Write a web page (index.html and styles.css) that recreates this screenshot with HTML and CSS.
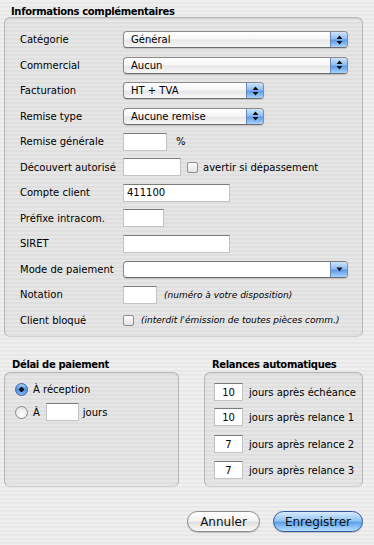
FILE: index.html
```html
<!DOCTYPE html>
<html lang="fr">
<head>
  <meta charset="UTF-8">
  <title>Informations complémentaires</title>
  <link rel="stylesheet" href="styles.css">
</head>
<body>

  <div class="group-title top">Informations complémentaires</div>
  <div class="group main">
    <div class="row">
      <span class="label">Catégorie</span>
      <div class="popup wide"><span class="value">Général</span><span class="knob"><svg width="7" height="10" viewBox="0 0 7 10"><path d="M3.5 0.5 L6.5 4 L0.5 4 Z M3.5 9.5 L6.5 6 L0.5 6 Z" fill="#111"/></svg></span></div>
    </div>
    <div class="row">
      <span class="label">Commercial</span>
      <div class="popup wide"><span class="value">Aucun</span><span class="knob"><svg width="7" height="10" viewBox="0 0 7 10"><path d="M3.5 0.5 L6.5 4 L0.5 4 Z M3.5 9.5 L6.5 6 L0.5 6 Z" fill="#111"/></svg></span></div>
    </div>
    <div class="row">
      <span class="label">Facturation</span>
      <div class="popup short"><span class="value">HT + TVA</span><span class="knob"><svg width="7" height="10" viewBox="0 0 7 10"><path d="M3.5 0.5 L6.5 4 L0.5 4 Z M3.5 9.5 L6.5 6 L0.5 6 Z" fill="#111"/></svg></span></div>
    </div>
    <div class="row">
      <span class="label">Remise type</span>
      <div class="popup short"><span class="value">Aucune remise</span><span class="knob"><svg width="7" height="10" viewBox="0 0 7 10"><path d="M3.5 0.5 L6.5 4 L0.5 4 Z M3.5 9.5 L6.5 6 L0.5 6 Z" fill="#111"/></svg></span></div>
    </div>
    <div class="row">
      <span class="label">Remise générale</span>
      <input class="field w44" type="text">
      <span class="unit">%</span>
    </div>
    <div class="row">
      <span class="label">Découvert autorisé</span>
      <input class="field w58" type="text">
      <span class="check"></span>
      <span class="note">avertir si dépassement</span>
    </div>
    <div class="row">
      <span class="label">Compte client</span>
      <input class="field w107" type="text" value="411100">
    </div>
    <div class="row">
      <span class="label">Préfixe intracom.</span>
      <input class="field w41" type="text">
    </div>
    <div class="row">
      <span class="label">SIRET</span>
      <input class="field w107" type="text">
    </div>
    <div class="row">
      <span class="label">Mode de paiement</span>
      <div class="combo"><span class="combo-field"></span><span class="knob"><svg width="7" height="5" viewBox="0 0 7 5"><path d="M0.5 0.5 L6.5 0.5 L3.5 4.5 Z" fill="#111"/></svg></span></div>
    </div>
    <div class="row">
      <span class="label">Notation</span>
      <input class="field w34" type="text">
      <span class="hint">(numéro à votre disposition)</span>
    </div>
    <div class="row">
      <span class="label">Client bloqué</span>
      <span class="check"></span>
      <span class="hint">(interdit l'émission de toutes pièces comm.)</span>
    </div>
  </div>

  <div class="bottom">
    <div class="col delay">
      <div class="group-title">Délai de paiement</div>
      <div class="group">
        <div class="radio-row"><span class="radio on"></span><span>À réception</span></div>
        <div class="radio-row"><span class="radio"></span><span>À</span><input class="field w33" type="text"><span>jours</span></div>
      </div>
    </div>
    <div class="col relances">
      <div class="group-title">Relances automatiques</div>
      <div class="group">
        <div class="relance"><input class="field num" type="text" value="10"><span>jours après échéance</span></div>
        <div class="relance"><input class="field num" type="text" value="10"><span>jours après relance 1</span></div>
        <div class="relance"><input class="field num" type="text" value="7"><span>jours après relance 2</span></div>
        <div class="relance"><input class="field num" type="text" value="7"><span>jours après relance 3</span></div>
      </div>
    </div>
  </div>

  <div class="actions">
    <button class="btn">Annuler</button>
    <button class="btn default">Enregistrer</button>
  </div>

</body>
</html>
```

FILE: styles.css
```css
body { margin: 0; width: 374px; height: 545px; font-family: "DejaVu Sans", sans-serif; font-size: 10px; color: #000; background: repeating-linear-gradient(to bottom, #efefef 0 2px, #e8e8e8 2px 4px); overflow: hidden; }

.group-title { font-weight: bold; font-size: 10px; letter-spacing: -0.35px; height: 14px; line-height: 14px; padding-left: 8px; }
.group-title.top { padding: 5px 0 0 11px; height: 12px; line-height: 13px; }
.group { box-sizing: border-box; border: 1px solid #b6b6b6; border-bottom-color: #cfcfcf; border-radius: 6px; background: rgba(0, 0, 0, 0.035); box-shadow: inset 0 1px 1px rgba(0, 0, 0, 0.06); }

.main { margin: 0 11px 0 4px; padding: 9px 0 4px 15px; height: 320px; }
.row { display: flex; align-items: center; height: 25.5px; }
.label { width: 103px; flex: none; }

.popup, .combo { display: flex; height: 17px; box-sizing: border-box; border: 1px solid #8a8a8a; border-bottom-color: #6d6d6d; border-radius: 4px; background: linear-gradient(#ffffff, #f6f6f6 45%, #e7e7e7 55%, #f7f7f7); box-shadow: 0 1px 1px rgba(0, 0, 0, 0.15); overflow: hidden; }
.popup.wide { width: 225px; }
.popup.short { width: 141px; }
.popup .value { flex: 1; padding-left: 7px; line-height: 15px; }
.knob { width: 16px; flex: none; display: flex; align-items: center; justify-content: center; border-left: 1px solid #6a86b8; background: linear-gradient(#cfe4fb, #8fbdf2 45%, #5f9be8 55%, #a8d3fb); }
.combo { width: 225px; background: #fff; border-top-color: #777; }
.combo-field { flex: 1; }

.field { box-sizing: border-box; height: 18px; margin: 0; padding: 0 3px; border: 1px solid #c3c3c3; border-top-color: #7b7b7b; background: #fff; font-family: inherit; font-size: 10px; color: #000; border-radius: 0; outline: none; }
.w33 { width: 33px; }
.w34 { width: 34px; }
.w41 { width: 41px; }
.w44 { width: 44px; }
.w58 { width: 58px; }
.w107 { width: 107px; }
.unit { margin-left: 9px; }
.check { width: 11px; height: 11px; flex: none; box-sizing: border-box; border: 1px solid #8e8e8e; border-radius: 2px; background: linear-gradient(#fdfdfd, #e4e4e4); margin-left: 6px; }
.row > .check:nth-child(2) { margin-left: 0; }
.note { margin-left: 5px; }
.hint { margin-left: 7px; font-style: italic; font-size: 9px; }

.bottom { display: flex; margin: 21px 11px 0 4px; gap: 25px; }
.col.delay { width: 175px; }
.col.relances { width: 159px; }
.col .group { height: 115px; }
.delay .group { padding: 7px 0 0 10px; }
.relances .group { padding: 10px 0 0 9px; }

.radio-row { display: flex; align-items: center; gap: 5px; height: 18px; margin-bottom: 5px; }
.radio-row .field { margin: 0 -1px 0 1px; }
.radio { width: 13px; height: 13px; box-sizing: border-box; border-radius: 50%; border: 1px solid #8a8a8a; background: radial-gradient(circle at 50% 70%, #ffffff, #dcdcdc); }
.radio.on { border-color: #3b5ea8; background: radial-gradient(circle, #111 0 2px, transparent 2.5px), linear-gradient(#a9d0fa, #4f8fe0 50%, #7eb9f5); }

.relance { display: flex; align-items: center; gap: 6px; height: 18px; margin-bottom: 7px; }
.relance:nth-child(2) { margin-bottom: 9px; }
.relance:nth-child(3) { margin-bottom: 8px; }
.num { width: 29px; text-align: center; }

.actions { display: flex; justify-content: flex-end; gap: 13px; margin: 24px 11px 0 0; }
.btn { height: 21px; padding: 0; border-radius: 11px; font-family: inherit; font-size: 12px; color: #111; border: 1px solid #8a8a8a; background: linear-gradient(#ffffff, #f3f3f3 45%, #e0e0e0 55%, #fbfbfb); box-shadow: 0 1px 1px rgba(0, 0, 0, 0.2); width: 73px; }
.btn.default { width: 90px; border-color: #34569a; background: linear-gradient(#d7ebfd, #93c4f4 45%, #5fa2ea 55%, #b4e0ff); }
```
